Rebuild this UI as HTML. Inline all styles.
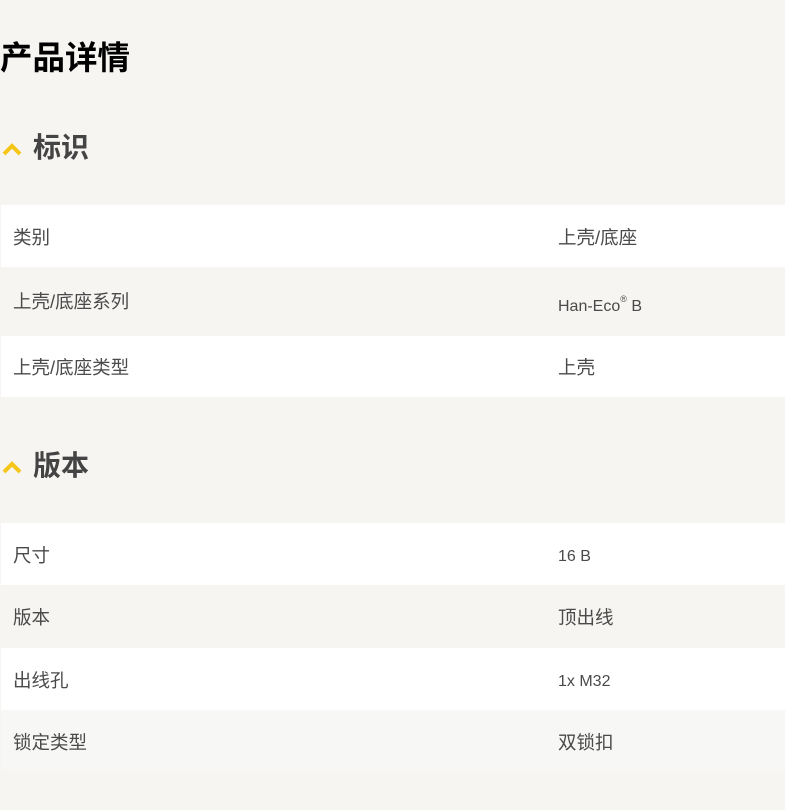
<!DOCTYPE html>
<html><head><meta charset="utf-8"><style>
body{margin:0;width:785px;height:810px;background:#f6f5f2;font-family:"Liberation Sans","Noto Sans CJK SC",sans-serif;color:#4a4a4a;overflow:hidden;position:relative}
h1{position:absolute;left:0;top:36px;margin:0;font-size:32.5px;font-weight:bold;color:#000;line-height:44px}
.h2{position:absolute;left:0;margin:0;font-size:28px;font-weight:bold;color:#444;line-height:36px}
.h2 svg{position:absolute;left:2px;top:12px}
.h2 span{margin-left:33px}
.t{position:absolute;left:1px;width:784px}
.r{position:relative;font-size:18.5px}
.r.w{background:#fff}
.r .a{position:absolute;left:12px}
.r .b{position:absolute;left:557px}
.s{font-size:16px}
sup{font-size:9px;vertical-align:9px}
</style></head><body>
<h1>产品详情</h1>
<div class="h2" style="top:130px"><svg width="20" height="14" viewBox="0 0 20 14"><path d="M2 12 L10 4 L18 12" stroke="#f5c518" stroke-width="4" fill="none"/></svg><span>标识</span></div>
<div class="t" style="top:205px">
<div class="r w" style="height:62px"><span class="a" style="top:19px">类别</span><span class="b" style="top:19px">上壳/底座</span></div>
<div class="r" style="height:69px"><span class="a" style="top:21px">上壳/底座系列</span><span class="b s" style="top:27px">Han-Eco<sup>®</sup> B</span></div>
<div class="r w" style="height:61px"><span class="a" style="top:18px">上壳/底座类型</span><span class="b" style="top:18px">上壳</span></div>
</div>
<div class="h2" style="top:448px"><svg width="20" height="14" viewBox="0 0 20 14"><path d="M2 12 L10 4 L18 12" stroke="#f5c518" stroke-width="4" fill="none"/></svg><span>版本</span></div>
<div class="t" style="top:523px">
<div class="r w" style="height:62px"><span class="a" style="top:19px">尺寸</span><span class="b s" style="top:25px">16 B</span></div>
<div class="r" style="height:63px"><span class="a" style="top:19px">版本</span><span class="b" style="top:19px">顶出线</span></div>
<div class="r w" style="height:62px"><span class="a" style="top:19px">出线孔</span><span class="b s" style="top:25px">1x M32</span></div>
<div class="r" style="height:61px;background:#f7f7f5"><span class="a" style="top:19px">锁定类型</span><span class="b" style="top:19px">双锁扣</span></div>
</div>
</body></html>
